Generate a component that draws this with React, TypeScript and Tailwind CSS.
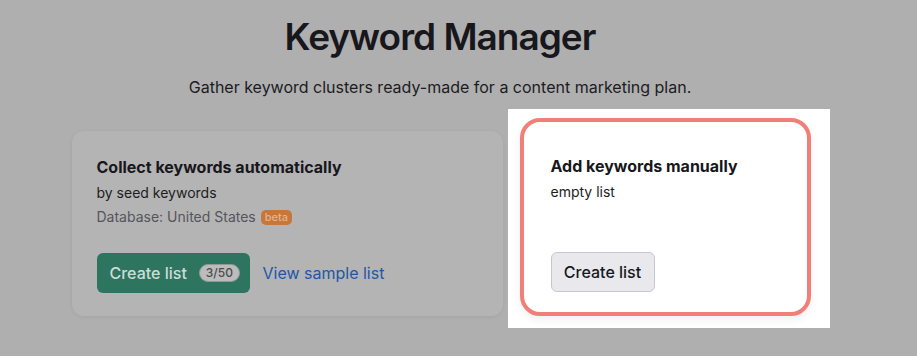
import React from "react";

export default function App() {
  return (
    <div
      className="w-[917px] h-[356px] bg-[#afafaf] overflow-hidden"
      style={{ fontFamily: "Inter, 'Noto Sans', sans-serif" }}
    >
      <div className="w-[880px] flex flex-col items-center">
        <h1 className="mt-[14px] text-[37px] leading-[46px] font-semibold text-[#17171c] tracking-[-1px]">
          Keyword Manager
        </h1>
        <p className="mt-[15px] text-[16px] leading-[24px] text-[#1c1c22]">
          Gather keyword clusters ready-made for a content marketing plan.
        </p>
        <div className="mt-[20px] ml-[2px] flex items-start gap-[17px]">
          {/* Left card (dimmed) */}
          <div className="mt-[12px] w-[431px] h-[185px] rounded-[12px] bg-[#b4b4b4] shadow-[0_1px_4px_rgba(0,0,0,0.06)] px-[25px] pt-[24px]">
            <div className="text-[16px] leading-[24px] font-bold text-[#17171c]">
              Collect keywords automatically
            </div>
            <div className="mt-[4px] text-[14px] leading-[20px] text-[#1c1c22]">
              by seed keywords
            </div>
            <div className="mt-[4px] flex items-center text-[14px] leading-[20px] text-[#55555c]">
              <span>Database: United States</span>
              <span className="ml-[5px] inline-flex items-center h-[15px] px-[4px] rounded-[5px] bg-[#c8773a] text-[#e2b38c] text-[11px] leading-[15px] font-medium">
                beta
              </span>
            </div>
            <div className="mt-[26px] flex items-center">
              <button className="h-[40px] w-[153px] rounded-[6px] bg-[#2e7560] flex items-center pl-[13px] text-[16px] text-[#cfdcd6] font-medium">
                <span>Create list</span>
                <span className="ml-[12px] h-[18px] px-[6px] rounded-full bg-[#bcbcbc] border border-[#8f9a96] text-[#4c4c4c] text-[12px] leading-[16px] font-medium">
                  3/50
                </span>
              </button>
              <a className="ml-[13px] text-[16px] text-[#1d58a6]">View sample list</a>
            </div>
          </div>

          {/* Right card (highlighted) */}
          <div className="relative mt-[-1px]">
            <div className="absolute left-[-12px] top-[-9px] right-[-19px] bottom-[-12px] bg-white" />
            <div className="relative w-[291px] h-[198px] rounded-[20px] border-[4px] border-[#f27f77] bg-white shadow-[0_4px_10px_rgba(0,0,0,0.06)] pl-[27px] pt-[32px]">
              <div className="text-[16px] leading-[24px] font-bold text-[#17171c]">
                Add keywords manually
              </div>
              <div className="mt-[4px] text-[14px] leading-[20px] text-[#1c1c22]">
                empty list
              </div>
              <button className="mt-[50px] h-[40px] w-[104px] rounded-[6px] bg-[#e9e9ed] border border-[#c6c6ce] text-[16px] text-[#17171c] font-medium">
                Create list
              </button>
            </div>
          </div>
        </div>
      </div>
    </div>
  );
}
